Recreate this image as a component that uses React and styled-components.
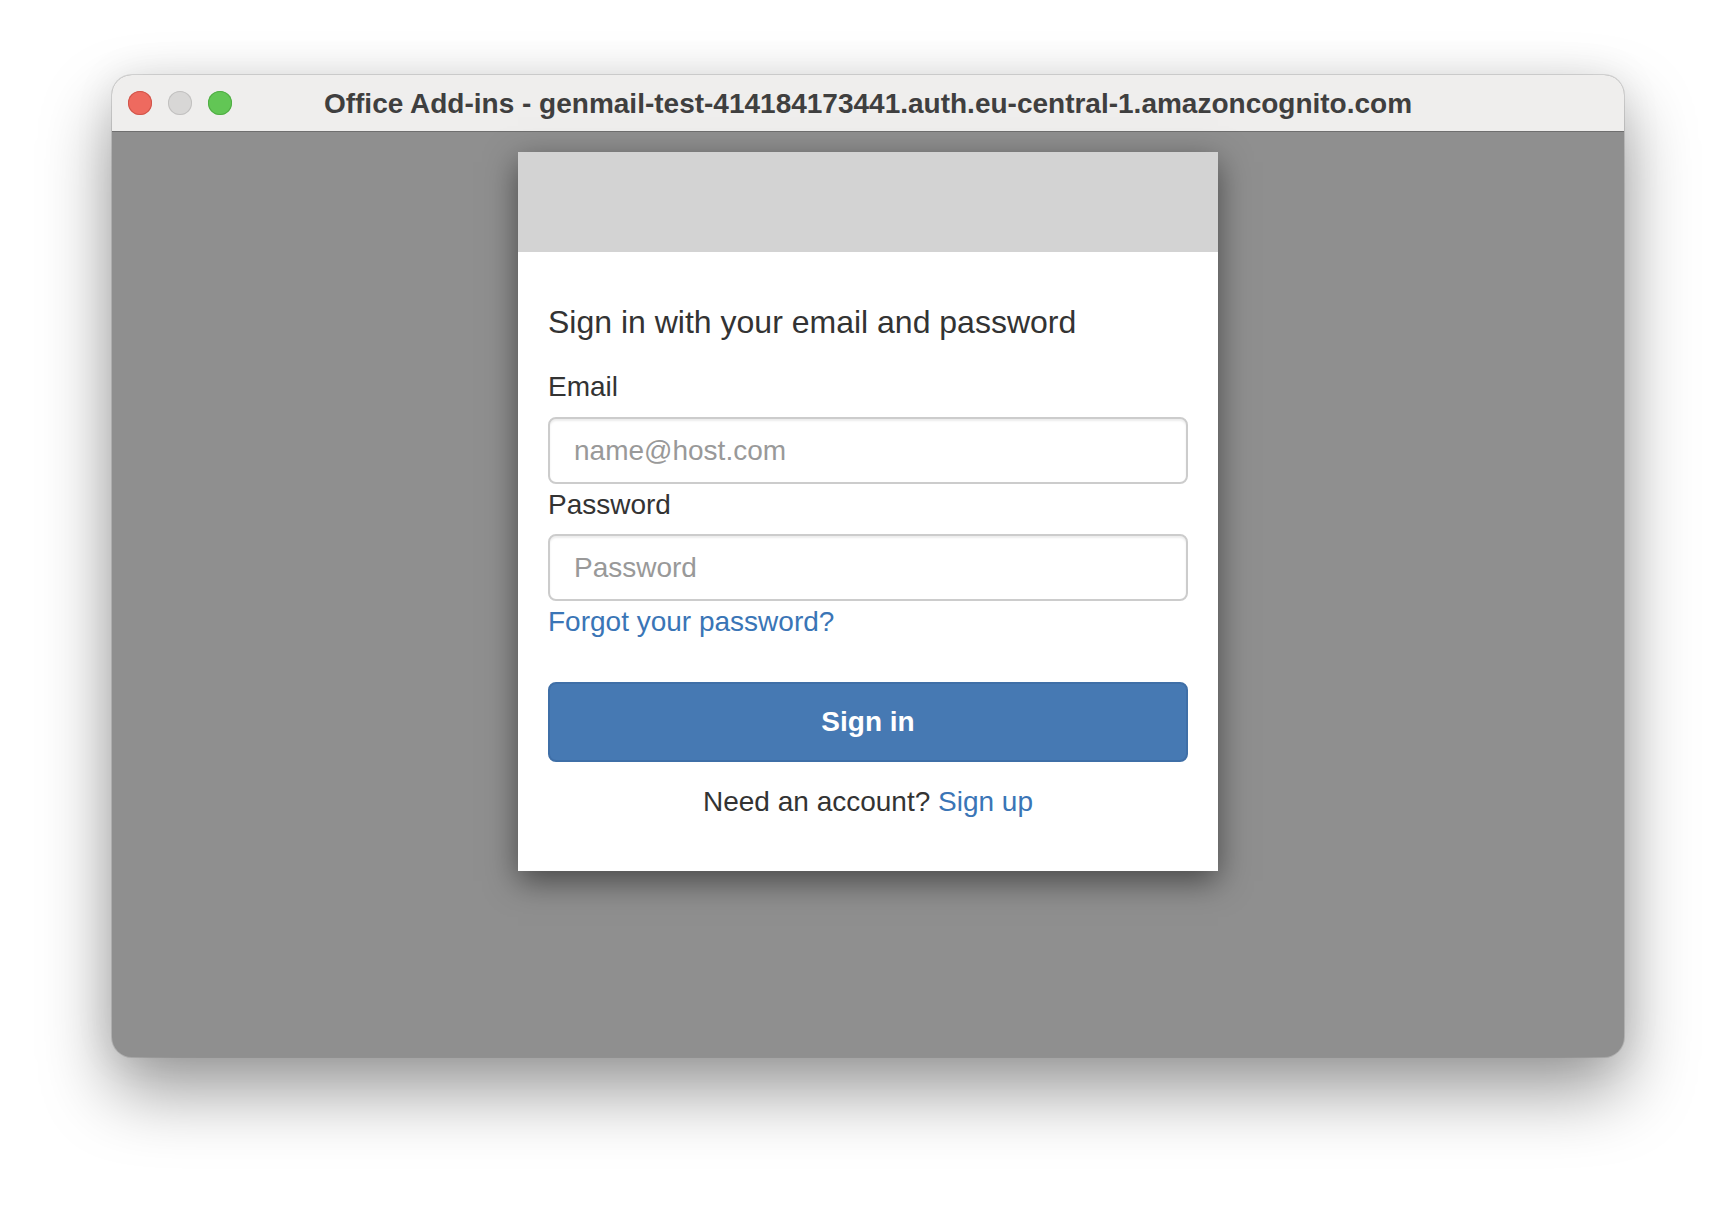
import styled, { createGlobalStyle } from "styled-components";

const GlobalStyle = createGlobalStyle`
  html, body {
    margin: 0;
    padding: 0;
    background: #ffffff;
  }
  body {
    font-family: "Liberation Sans", Arial, Helvetica, sans-serif;
  }
  * {
    box-sizing: border-box;
  }
`;

const Page = styled.div`
  width: 1736px;
  height: 1206px;
  padding: 75px 112px 0;
  background: #ffffff;
`;

const Window = styled.div`
  height: 982px;
  display: flex;
  flex-direction: column;
  border-radius: 20px;
  overflow: hidden;
  background: #8f8f8f;
  box-shadow: 0 0 0 1px rgba(0, 0, 0, 0.12), 0 34px 70px rgba(0, 0, 0, 0.4),
    0 0 40px rgba(0, 0, 0, 0.08);
`;

const TitleBar = styled.div`
  height: 57px;
  flex: none;
  display: grid;
  grid-template-columns: 1fr auto 1fr;
  align-items: center;
  background: #efeeed;
  border-bottom: 1px solid #6f6f6f;
`;

const Lights = styled.div`
  display: flex;
  gap: 16px;
  padding-left: 16px;
`;

const Light = styled.span`
  width: 24px;
  height: 24px;
  border-radius: 50%;
  background: ${(p) => p.$color};
  box-shadow: inset 0 0 0 1px ${(p) => p.$edge};
`;

const Title = styled.div`
  font-family: "Liberation Sans", Arial, sans-serif;
  font-weight: 700;
  font-size: 28px;
  color: #3f3f3f;
  white-space: nowrap;
  padding-top: 2px;
`;

const Content = styled.div`
  flex: 1;
  display: flex;
  justify-content: center;
  align-items: flex-start;
  padding-top: 20px;
`;

const Card = styled.div`
  width: 700px;
  background: #ffffff;
  box-shadow: 0 10px 30px rgba(0, 0, 0, 0.5);
`;

const Banner = styled.div`
  height: 100px;
  background: #d3d3d3;
`;

const Body = styled.div`
  display: flex;
  flex-direction: column;
  padding: 52px 30px 53px;
  color: #333333;
`;

const Heading = styled.h1`
  margin: 0 0 31px;
  font-size: 32px;
  line-height: 36px;
  font-weight: 400;
  color: #333333;
`;

const Label = styled.label`
  display: block;
  margin-bottom: ${(p) => p.$gap}px;
  font-size: 28px;
  line-height: 32px;
  color: #333333;
`;

const Input = styled.input`
  display: block;
  width: 100%;
  height: 67px;
  padding: 0 24px;
  margin: 0;
  border: 2px solid #cccccc;
  border-radius: 8px;
  font-family: "Liberation Sans", Arial, sans-serif;
  font-size: 28px;
  color: #555555;
  background: #ffffff;
  box-shadow: inset 0 2px 2px rgba(0, 0, 0, 0.075);
  outline: none;

  &::placeholder {
    color: #999999;
  }
`;

const Field = styled.div`
  margin-bottom: ${(p) => p.$gap}px;
`;

const Link = styled.a`
  color: #3a75b6;
  text-decoration: none;
  cursor: pointer;
`;

const Forgot = styled(Link)`
  display: block;
  font-size: 28px;
  line-height: 32px;
  margin-bottom: 44px;
`;

const Button = styled.button`
  display: block;
  width: 100%;
  height: 80px;
  margin: 0 0 24px;
  border: 2px solid #3f6fa7;
  border-radius: 8px;
  background: #4679b3;
  color: #ffffff;
  font-family: "Liberation Sans", Arial, sans-serif;
  font-size: 28px;
  font-weight: 700;
  cursor: pointer;
`;

const Footer = styled.p`
  margin: 0;
  text-align: center;
  font-size: 28px;
  line-height: 32px;
  color: #333333;
`;

const App = () => {
  return (
    <>
      <GlobalStyle />
      <Page>
        <Window>
          <TitleBar>
            <Lights>
              <Light $color="#ee6a5f" $edge="#d0554b" />
              <Light $color="#d8d7d6" $edge="#c2c1c0" />
              <Light $color="#62c655" $edge="#50ad44" />
            </Lights>
            <Title>
              Office Add-ins - genmail-test-414184173441.auth.eu-central-1.amazoncognito.com
            </Title>
            <div />
          </TitleBar>
          <Content>
            <Card>
              <Banner />
              <Body>
                <Heading>Sign in with your email and password</Heading>
                <Label htmlFor="email" $gap={14}>
                  Email
                </Label>
                <Field $gap={5}>
                  <Input id="email" type="email" placeholder="name@host.com" />
                </Field>
                <Label htmlFor="password" $gap={13}>
                  Password
                </Label>
                <Field $gap={5}>
                  <Input id="password" type="password" placeholder="Password" />
                </Field>
                <Forgot>Forgot your password?</Forgot>
                <Button type="button">Sign in</Button>
                <Footer>
                  Need an account? <Link>Sign up</Link>
                </Footer>
              </Body>
            </Card>
          </Content>
        </Window>
      </Page>
    </>
  );
};

export default App;
